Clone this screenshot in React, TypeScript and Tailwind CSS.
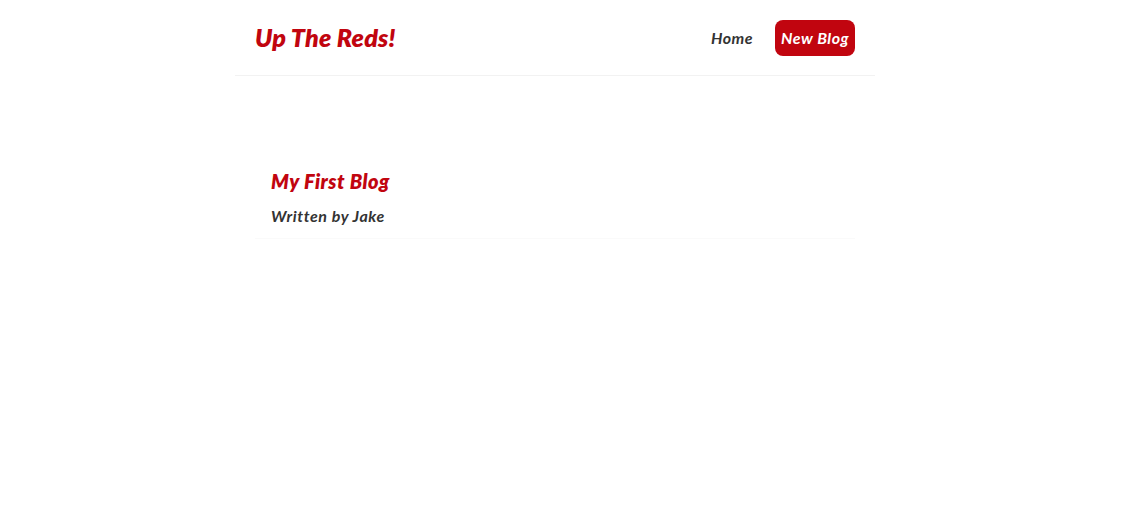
const App = () => {
  return (
    <div className="min-h-[521px] bg-white pr-8 font-['Lato','Open_Sans',sans-serif] italic">
      <nav className="mx-auto flex h-[76px] max-w-[640px] items-center border-b border-[#f2f2f2] px-5">
        <h1 className="text-[25px] font-extrabold leading-none tracking-[0.2px] text-[#c1050f]">Up The Reds!</h1>
        <div className="ml-auto flex items-center">
          <a className="px-1.5 py-1.5 text-[16px] font-bold tracking-[0.5px] text-[#333]">Home</a>
          <a className="ml-4 rounded-lg bg-[#c1050f] px-1.5 py-1.5 text-[16px] font-bold tracking-[0.5px] text-white">New Blog</a>
        </div>
      </nav>
      <div className="mx-auto mt-[80px] max-w-[600px]">
        <div className="border-b border-[#fafafa] px-4 pb-2.5 pt-2.5">
          <h2 className="mb-2 text-[20px] font-extrabold tracking-[0.5px] text-[#c1050f]">My First Blog</h2>
          <p className="text-[16px] font-bold tracking-[0.6px] text-[#333]">Written by Jake</p>
        </div>
      </div>
    </div>
  );
};

export default App;
